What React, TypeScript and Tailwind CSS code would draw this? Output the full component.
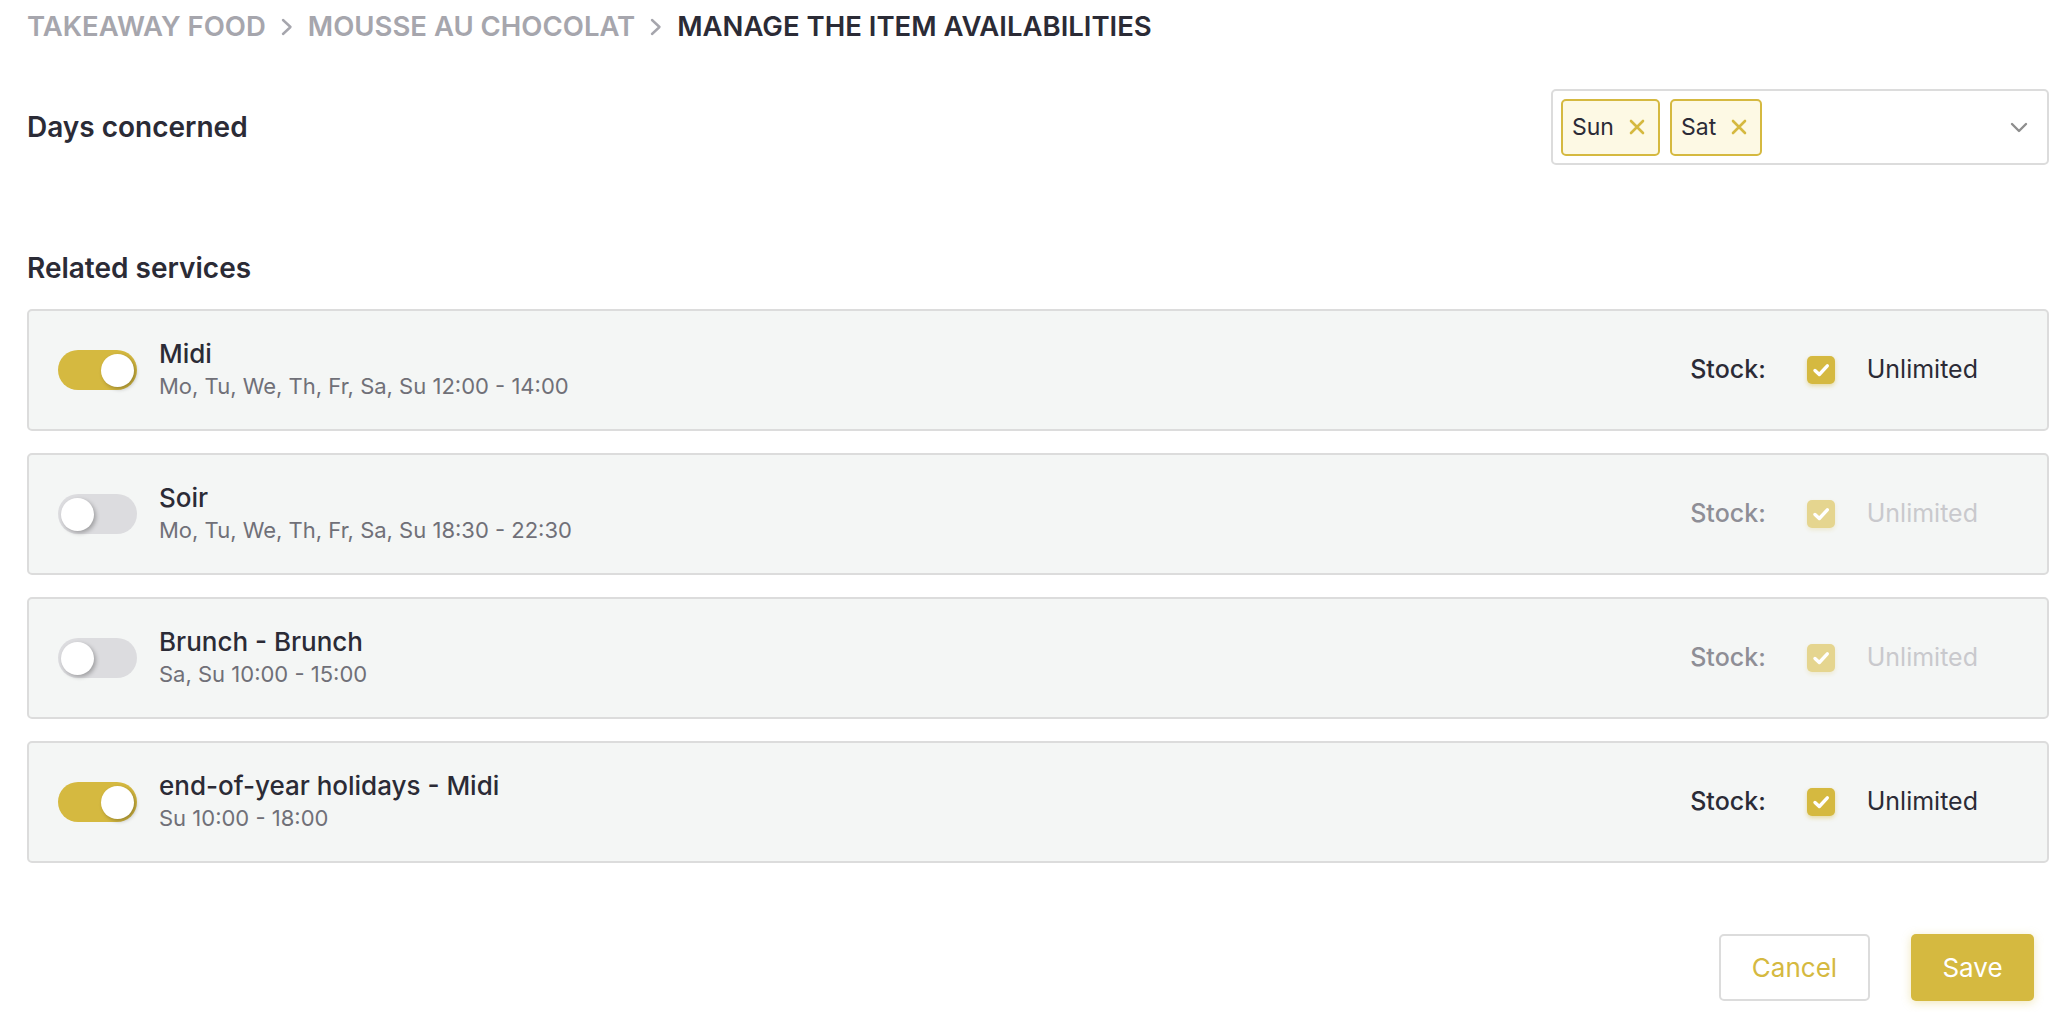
import { Fragment } from "react"

const services = [
  { name: "Midi", hours: "Mo, Tu, We, Th, Fr, Sa, Su 12:00 - 14:00", on: true },
  { name: "Soir", hours: "Mo, Tu, We, Th, Fr, Sa, Su 18:30 - 22:30", on: false },
  { name: "Brunch - Brunch", hours: "Sa, Su 10:00 - 15:00", on: false },
  { name: "end-of-year holidays - Midi", hours: "Su 10:00 - 18:00", on: true },
]

const crumbs = ["Takeaway food", "Mousse au chocolat", "Manage the item availabilities"]

function Crumb() {
  return (
    <svg width="12" height="20" viewBox="0 0 12 20" className="mx-[15px]">
      <path d="M2 3 L9.5 10 L2 17" fill="none" stroke="#a6a6ad" strokeWidth="2.4" strokeLinecap="round" strokeLinejoin="round" />
    </svg>
  )
}

function Chip({ label }: { label: string }) {
  return (
    <div className="h-[57px] flex items-center gap-[15px] pl-[9px] pr-[13px] border-2 border-[#d5b940] rounded-[5px] bg-[#fdf9e4] text-[23px] text-[#2b2b36]">
      <span>{label}</span>
      <svg width="16" height="16" viewBox="0 0 16 16">
        <path d="M2 2 L14 14 M14 2 L2 14" stroke="#d5b940" strokeWidth="2.6" strokeLinecap="round" />
      </svg>
    </div>
  )
}

function Toggle({ on }: { on: boolean }) {
  return (
    <div
      className={`w-[79px] h-[40px] rounded-full flex items-center px-[3px] shrink-0 ${
        on ? "bg-[#d5b940] justify-end" : "bg-[#dcdcdf] justify-start"
      }`}
    >
      <div className="w-[33px] h-[33px] rounded-full bg-white shadow-[2px_2px_4px_rgba(0,0,0,0.28)]" />
    </div>
  )
}

function Check({ on }: { on: boolean }) {
  return (
    <div
      className={`w-[28px] h-[28px] rounded-[5px] flex items-center justify-center ${
        on ? "bg-[#d5b940] shadow-[0_2px_4px_rgba(213,185,64,0.45)]" : "bg-[#e5d58f] shadow-[0_2px_4px_rgba(213,185,64,0.2)]"
      }`}
    >
      <svg width="20" height="20" viewBox="0 0 20 20">
        <path d="M4 10.5 L8.3 14.5 L16.3 5.8" fill="none" stroke="white" strokeWidth="3.4" strokeLinecap="round" strokeLinejoin="round" />
      </svg>
    </div>
  )
}

export default function App() {
  return (
    <div className="w-[2056px] h-[1012px] bg-white pl-[27px] pr-[7px] font-['Inter',sans-serif] text-[#2b2b36]">
      {/* breadcrumb */}
      <div className="h-[54px] flex items-center text-[27.5px] font-semibold uppercase">
        {crumbs.map((c, i) => (
          <Fragment key={c}>
            {i > 0 && <Crumb />}
            <span className={i === crumbs.length - 1 ? "text-[#2b2b36]" : "text-[#a6a6ad]"}>{c}</span>
          </Fragment>
        ))}
      </div>

      {/* days */}
      <div className="mt-[35px] h-[76px] flex items-center justify-between">
        <div className="text-[28px] font-semibold">Days concerned</div>
        <div className="w-[498px] h-[76px] border-2 border-[#dcdcdc] rounded-[5px] flex items-center pl-[8px] pr-[19px] gap-[10px]">
          <Chip label="Sun" />
          <Chip label="Sat" />
          <svg width="18" height="11" viewBox="0 0 18 11" className="ml-auto">
            <path d="M2 2 L9 9 L16 2" fill="none" stroke="#8e8e8e" strokeWidth="2.4" strokeLinecap="round" strokeLinejoin="round" />
          </svg>
        </div>
      </div>

      {/* services */}
      <div className="mt-[85px] h-[35px] flex items-center text-[28px] font-semibold">Related services</div>
      <div className="mt-[24px] flex flex-col gap-[22px]">
        {services.map((s) => (
          <div
            key={s.name}
            className="h-[122px] border-2 border-[#dcdcdc] rounded-[5px] bg-[#f4f6f5] flex items-center pl-[29px] pr-[69px]"
          >
            <Toggle on={s.on} />
            <div className="ml-[22px] flex flex-col">
              <div className="text-[26px] font-medium leading-[33px]">{s.name}</div>
              <div className="text-[22px] leading-[33px] text-[#707078]">{s.hours}</div>
            </div>
            <div className="ml-auto flex items-center">
              <span className={`text-[25px] font-medium ${s.on ? "text-[#2b2b36]" : "text-[#8e8e96]"}`}>Stock:</span>
              <div className="ml-[41px]">
                <Check on={s.on} />
              </div>
              <span className={`ml-[32px] text-[25px] ${s.on ? "text-[#2b2b36]" : "text-[#c9c9cd]"}`}>Unlimited</span>
            </div>
          </div>
        ))}
      </div>

      {/* actions */}
      <div className="mt-[71px] flex justify-end gap-[41px] pr-[15px]">
        <button className="w-[151px] h-[67px] border-2 border-[#dcdcdc] rounded-[5px] bg-white text-[26px] text-[#d5b940]">
          Cancel
        </button>
        <button className="w-[123px] h-[67px] rounded-[5px] bg-[#d5b940] text-[26px] text-white shadow-[0_2px_10px_rgba(213,185,64,0.35)]">
          Save
        </button>
      </div>
    </div>
  )
}
